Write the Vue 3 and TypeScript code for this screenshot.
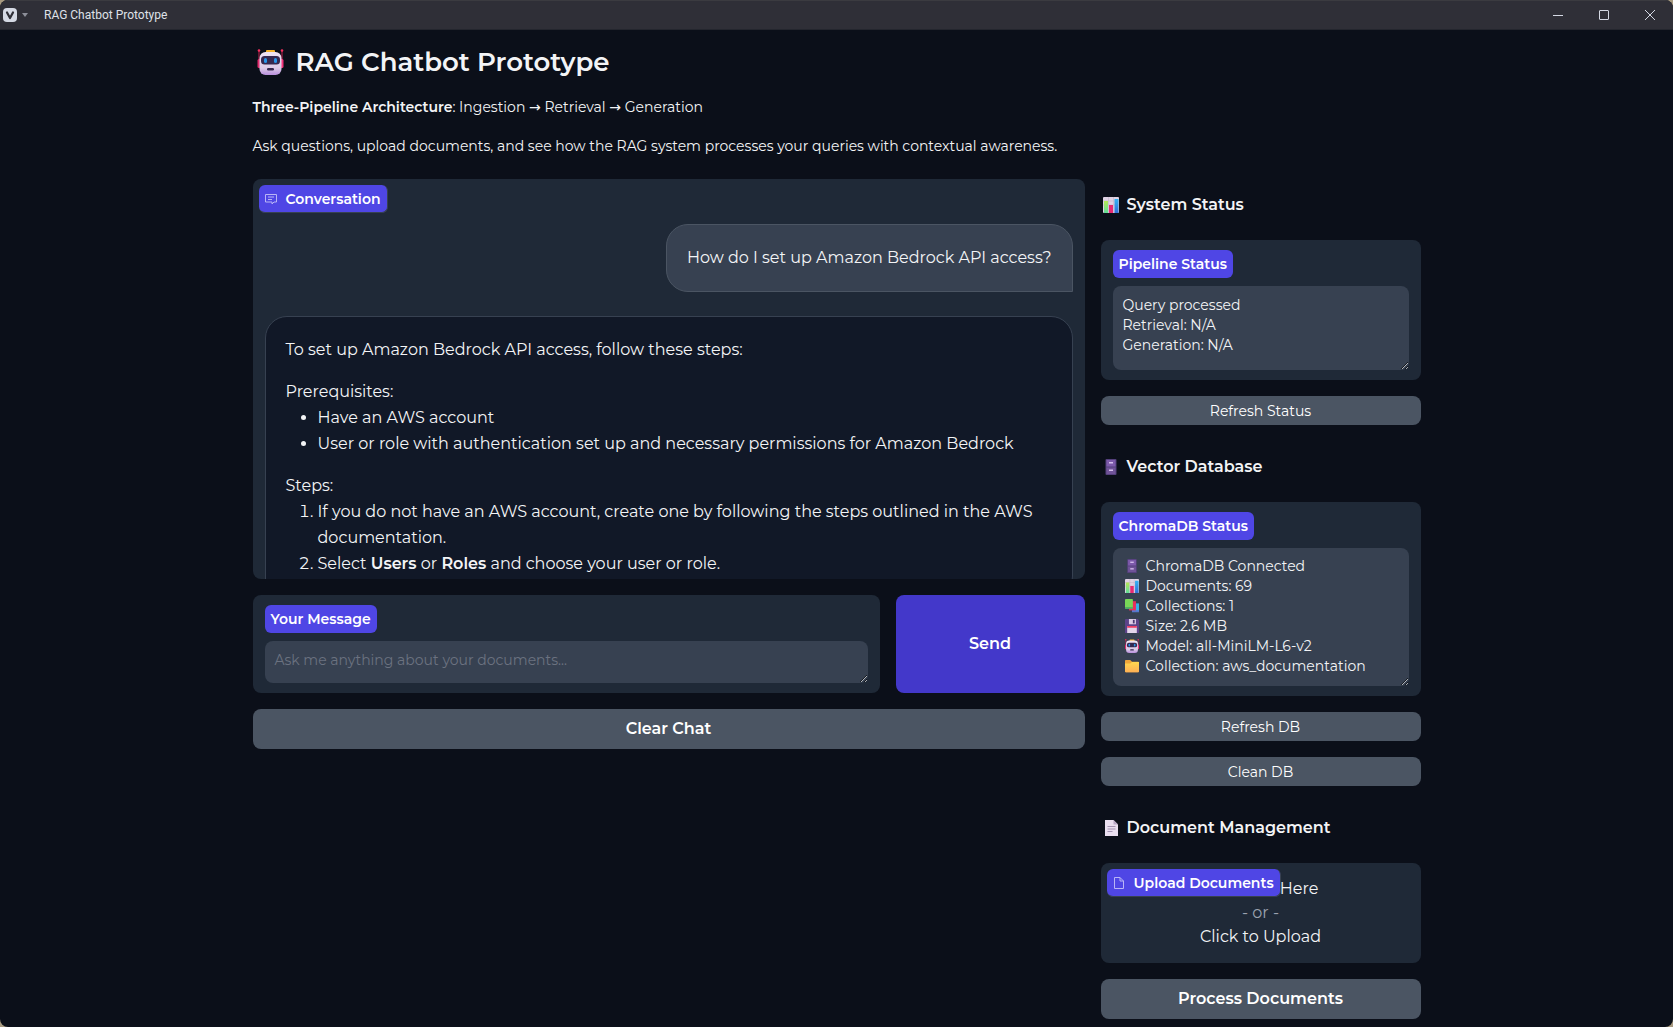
<script setup lang="ts">
import { ref } from 'vue'

const message = ref('')
const pipelineStatus = ref('Query processed\nRetrieval: N/A\nGeneration: N/A')

const databaseRows = [
  { icon: 'cabinet', text: 'ChromaDB Connected' },
  { icon: 'chart', text: 'Documents: 69' },
  { icon: 'books', text: 'Collections: 1' },
  { icon: 'floppy', text: 'Size: 2.6 MB' },
  { icon: 'robot', text: 'Model: all-MiniLM-L6-v2' },
  { icon: 'folder', text: 'Collection: aws_documentation' },
]
const databaseStatus = ref(databaseRows.map((row) => row.text).join('\n'))
</script>

<template>
  <div class="window">
    <svg class="sprite" aria-hidden="true">
      <defs>
        <linearGradient id="face" x1="0" y1="0" x2="0" y2="1">
          <stop offset="0" stop-color="#efe3f3" />
          <stop offset="0.7" stop-color="#dccbe8" />
          <stop offset="1" stop-color="#b98fdc" />
        </linearGradient>
        <linearGradient id="green" x1="0" y1="0" x2="0" y2="1">
          <stop offset="0" stop-color="#b5e655" />
          <stop offset="1" stop-color="#5fdc9a" />
        </linearGradient>
        <linearGradient id="yellow" x1="0" y1="0" x2="0" y2="1">
          <stop offset="0" stop-color="#ffd84f" />
          <stop offset="1" stop-color="#ffb055" />
        </linearGradient>
        <linearGradient id="blue" x1="0" y1="0" x2="0" y2="1">
          <stop offset="0" stop-color="#35b4f4" />
          <stop offset="1" stop-color="#3070d8" />
        </linearGradient>
      </defs>
      <symbol id="robot" viewBox="0 0 26 26">
        <path d="M1.5 1v16M24.500 1v16" stroke="#c4204e" stroke-width="1" />
        <circle cx="1.500" cy="1.500" r="1.300" fill="#f5315e" />
        <circle cx="24.500" cy="1.500" r="1.300" fill="#f5315e" />
        <rect x="0" y="10" width="4" height="9" rx="1.500" fill="#e02b6c" />
        <rect x="22" y="10" width="4" height="9" rx="1.500" fill="#f5357c" />
        <rect x="8.500" y="1" width="9" height="4" rx="1" fill="#f6b32b" />
        <rect x="2" y="3" width="22" height="23" rx="6" fill="url(#face)" />
        <rect x="3.500" y="7" width="19" height="8.500" rx="3.500" fill="#35284f" />
        <rect x="6.500" y="9" width="3" height="5" rx="1.500" fill="#2795e8" />
        <rect x="16.500" y="9" width="3" height="5" rx="1.500" fill="#2795e8" />
        <rect x="9.500" y="19" width="7" height="2.500" rx="1.200" fill="#35284f" />
      </symbol>
      <symbol id="chart" viewBox="0 0 16 16">
        <rect width="16" height="16" rx="1" fill="#e0d3e4" />
        <path d="M0 4h16M0 8h16M5.500 0v16M10.500 0v16" stroke="#c3b5cc" stroke-width="0.600" />
        <rect x="1" y="4" width="4" height="12" fill="url(#green)" />
        <rect x="6" y="8" width="4" height="8" fill="#e82a72" />
        <rect x="11.500" y="2" width="4" height="14" fill="url(#blue)" />
      </symbol>
      <symbol id="cabinet" viewBox="0 0 16 16">
        <rect x="2.500" width="11" height="16" rx="1" fill="#54407c" />
        <rect x="3.500" y="1" width="9" height="6.500" fill="#7d5aab" />
        <rect x="3.500" y="8.500" width="9" height="6.500" fill="#705398" />
        <rect x="6" y="3" width="4" height="1.500" fill="#d6bfee" />
        <rect x="6" y="10.500" width="4" height="1.500" fill="#d6bfee" />
      </symbol>
      <symbol id="books" viewBox="0 0 16 16">
        <rect x="8" y="5" width="8" height="10" fill="#35aee8" />
        <rect x="8" y="13" width="8" height="2" fill="#5a75cf" />
        <rect x="4.500" y="2.500" width="8" height="10.500" fill="#e92d5c" />
        <rect x="0" y="0" width="9" height="11" rx="0.500" fill="#79d657" />
        <rect x="0" y="9.500" width="9" height="1.500" fill="#439e6b" />
      </symbol>
      <symbol id="floppy" viewBox="0 0 16 16">
        <path d="M1 0h13.500L16 1.500V16H0V1a1 1 0 0 1 1-1z" fill="#5b4388" />
        <rect x="4.500" width="8" height="6" fill="#dccbe6" />
        <rect x="9" y="1" width="2" height="4" fill="#4a3870" />
        <rect x="2.500" y="8" width="11" height="8" fill="#e4d6ea" />
        <rect x="2.500" y="8" width="11" height="2" fill="#f03c63" />
      </symbol>
      <symbol id="folder" viewBox="0 0 16 16">
        <path d="M0 2a1 1 0 0 1 1-1h5l2 2h7a1 1 0 0 1 1 1v10a1 1 0 0 1-1 1H1a1 1 0 0 1-1-1z" fill="#f0a63a" />
        <path d="M0 5h6l2-1.500h8V14a1 1 0 0 1-1 1H1a1 1 0 0 1-1-1z" fill="url(#yellow)" />
      </symbol>
      <symbol id="page" viewBox="0 0 16 16">
        <path d="M2 0h8.500L15 4.500V16H2z" fill="#eadff0" />
        <path d="M10.500 0v4.500H15z" fill="#b9a8c6" />
        <path d="M4.500 6.500h8M4.500 9h8M4.500 11.500h5" stroke="#a594b3" stroke-width="1" />
      </symbol>
    </svg>

    <header class="titlebar">
      <svg class="app-logo" viewBox="0 0 14 14" aria-hidden="true">
        <rect width="14" height="14" rx="4" fill="#d5d9e4" />
        <path d="M4 4.500l3 5.500 3-5.500" fill="none" stroke="#2f2f37" stroke-width="2.200" stroke-linecap="round" stroke-linejoin="round" />
      </svg>
      <svg class="caret" viewBox="0 0 6 4" aria-hidden="true"><path d="M0 0h6L3 4z" fill="#8d8f99" /></svg>
      <span class="window-title">RAG Chatbot Prototype</span>
      <div class="window-controls">
        <button type="button" aria-label="Minimize">
          <svg viewBox="0 0 10 10"><path d="M0 5.500h10" /></svg>
        </button>
        <button type="button" aria-label="Maximize">
          <svg viewBox="0 0 10 10"><rect x="0.500" y="0.500" width="9" height="9" rx="0.500" /></svg>
        </button>
        <button type="button" aria-label="Close">
          <svg viewBox="0 0 10 10"><path d="M0 0l10 10M10 0L0 10" /></svg>
        </button>
      </div>
    </header>

    <main class="page">
      <h1><svg class="h1-icon" aria-hidden="true"><use href="#robot" /></svg>RAG Chatbot Prototype</h1>
      <p class="intro">
        <strong>Three-Pipeline Architecture</strong>: Ingestion <span class="arrow">→</span> Retrieval
        <span class="arrow">→</span> Generation
      </p>
      <p class="intro">Ask questions, upload documents, and see how the RAG system processes your queries with contextual awareness.</p>

      <div class="columns">
        <div class="chat-column">
          <section class="chat" aria-label="Conversation">
            <div class="tag tag-corner">
              <svg class="tag-icon" viewBox="0 0 12 12" aria-hidden="true">
                <path d="M0.500 1.500h11v7.500H9L7 11V9H0.500z M3 4h6M3 6.500h4" />
              </svg>
              Conversation
            </div>
            <div class="bubble user"><p>How do I set up Amazon Bedrock API access?</p></div>
            <div class="bubble bot">
              <p>To set up Amazon Bedrock API access, follow these steps:</p>
              <p class="lead">Prerequisites:</p>
              <ul>
                <li>Have an AWS account</li>
                <li>User or role with authentication set up and necessary permissions for Amazon Bedrock</li>
              </ul>
              <p class="lead">Steps:</p>
              <ol>
                <li>If you do not have an AWS account, create one by following the steps outlined in the AWS documentation.</li>
                <li>Select <strong>Users</strong> or <strong>Roles</strong> and choose your user or role.</li>
              </ol>
            </div>
          </section>

          <form class="composer" @submit.prevent>
            <div class="panel message">
              <label class="tag" for="message">Your Message</label>
              <textarea id="message" v-model="message" rows="1" placeholder="Ask me anything about your documents..."></textarea>
            </div>
            <button type="submit" class="btn primary">Send</button>
          </form>
          <button type="button" class="btn">Clear Chat</button>
        </div>

        <aside class="side-column">
          <h2><svg class="h2-icon" aria-hidden="true"><use href="#chart" /></svg>System Status</h2>
          <div class="panel">
            <label class="tag" for="pipeline">Pipeline Status</label>
            <textarea id="pipeline" v-model="pipelineStatus" class="status" rows="3"></textarea>
          </div>
          <button type="button" class="btn small">Refresh Status</button>

          <h2><svg class="h2-icon" aria-hidden="true"><use href="#cabinet" /></svg>Vector Database</h2>
          <div class="panel">
            <label class="tag" for="database">ChromaDB Status</label>
            <div class="status-box">
              <textarea id="database" v-model="databaseStatus" class="with-icons" rows="6"></textarea>
              <div class="row-icons" aria-hidden="true">
                <svg v-for="row in databaseRows" :key="row.icon"><use :href="'#' + row.icon" /></svg>
              </div>
            </div>
          </div>
          <button type="button" class="btn small">Refresh DB</button>
          <button type="button" class="btn small">Clean DB</button>

          <h2><svg class="h2-icon" aria-hidden="true"><use href="#page" /></svg>Document Management</h2>
          <div class="upload">
            <div class="tag tag-corner">
              <svg class="tag-icon" viewBox="0 0 12 12" aria-hidden="true">
                <path d="M1.500 0.500h5.500l3.500 3.500v7.500h-9z M7 0.500V4h3.500" />
              </svg>
              Upload Documents
            </div>
            <button type="button" class="dropzone">
              <span>Drop File Here</span>
              <span class="or">- or -</span>
              <span>Click to Upload</span>
            </button>
          </div>
          <button type="button" class="btn">Process Documents</button>
        </aside>
      </div>
    </main>
  </div>
</template>

<style>
html {
  background: #a89a80;
}
body {
  margin: 0;
}
</style>

<style scoped>
* {
  box-sizing: border-box;
}
.window {
  min-height: 100vh;
  overflow: hidden;
  border-radius: 8px;
  background: #0b0f19;
  color: #f3f4f6;
  font-family: Montserrat, Inter, sans-serif;
  font-size: 16px;
  line-height: 26px;
}
.sprite {
  position: absolute;
  width: 0;
  height: 0;
}
button,
textarea {
  font-family: inherit;
  color: inherit;
}
button {
  border: 0;
  padding: 0;
  cursor: pointer;
}
p,
h1,
h2,
ul,
ol {
  margin: 0;
}
strong {
  font-weight: 600;
}

.titlebar {
  display: flex;
  align-items: center;
  height: 30px;
  padding-left: 3px;
  border-top: 1px solid #3b3b40;
  border-bottom: 1px solid #24262e;
  background: #2f2f37;
}
.app-logo {
  width: 14px;
  height: 14px;
}
.caret {
  width: 6px;
  height: 4px;
  margin: 0 16px 0 5px;
}
.window-title {
  flex: 1;
  color: #dfe1e8;
  font: 12px/16px Roboto, "Open Sans", sans-serif;
}
.window-controls {
  display: flex;
}
.window-controls button {
  display: grid;
  place-items: center;
  width: 46px;
  height: 28px;
  background: transparent;
}
.window-controls svg {
  width: 10px;
  height: 10px;
  overflow: visible;
  fill: none;
  stroke: #d5d9e4;
}

.page {
  width: 100%;
  max-width: 1200px;
  margin: 0 auto;
  padding: 14px 16px 8px;
}
h1 {
  display: flex;
  align-items: center;
  gap: 12px;
  padding-left: 4px;
  margin-bottom: 16px;
  font-size: 26px;
  font-weight: 600;
  line-height: 36px;
}
.h1-icon {
  width: 27px;
  height: 26px;
}
.intro {
  margin-bottom: 16px;
  font-size: 14px;
  line-height: 23px;
}
.arrow {
  font-family: "DejaVu Sans", sans-serif;
  line-height: 16px;
}
.columns {
  display: flex;
  align-items: flex-start;
  gap: 16px;
  padding-top: 5px;
}
.chat-column,
.side-column {
  display: flex;
  flex-direction: column;
  gap: 16px;
}
.chat-column {
  flex: 1;
  min-width: 0;
}
.side-column {
  width: 320px;
}

.chat {
  position: relative;
  display: flex;
  flex-direction: column;
  gap: 24px;
  height: 400px;
  padding: 45px 12px 0;
  overflow: hidden;
  border-radius: 8px;
  background: #1f2937;
}
.bubble {
  flex: none;
  padding: 20px;
  border: 1px solid #374151;
  border-radius: 22px;
}
.user {
  align-self: flex-end;
  border-color: #4b5563;
  border-bottom-right-radius: 0;
  background: #374151;
}
.bot {
  border-bottom-left-radius: 0;
  background: #111827;
}
.lead {
  margin-top: 16px;
}
ul,
ol {
  padding-left: 32px;
}

.tag {
  display: inline-flex;
  align-items: center;
  align-self: flex-start;
  gap: 9px;
  height: 28px;
  padding: 0 6px;
  border-radius: 6px;
  background: #4f46e5;
  color: #fff;
  font-size: 14px;
  font-weight: 600;
  line-height: 20px;
}
.tag-corner {
  position: absolute;
  top: 6px;
  left: 6px;
  z-index: 1;
  border-right: 1px solid #374151;
  border-bottom: 1px solid #374151;
}
.tag-icon {
  width: 12px;
  height: 12px;
  fill: none;
  stroke: #b9b5f6;
  stroke-linejoin: round;
}

.panel {
  display: flex;
  flex-direction: column;
  gap: 8px;
  padding: 10px 12px;
  border-radius: 8px;
  background: #1f2937;
}
textarea {
  display: block;
  width: 100%;
  padding: 9px 10px;
  border: 0;
  border-radius: 8px;
  outline: 0;
  background: #374151;
  font-size: 14px;
  line-height: 20px;
  resize: both;
  overflow: hidden;
}
textarea::placeholder {
  color: #6b7280;
}
.message textarea {
  height: 42px;
}
.status {
  height: 84px;
}
.status-box {
  position: relative;
}
.with-icons {
  padding: 8px 10px 10px 33px;
}
.row-icons {
  position: absolute;
  top: 11px;
  left: 12px;
  display: grid;
  gap: 6px;
}
.row-icons svg {
  width: 14px;
  height: 14px;
}

.composer {
  display: flex;
  gap: 16px;
}
.message {
  flex: 1;
}
.btn {
  height: 40px;
  border-radius: 8px;
  background: #4b5563;
  color: #fff;
  font-size: 16px;
  font-weight: 600;
  line-height: 24px;
}
.small {
  height: 29px;
  font-size: 14px;
  font-weight: 400;
  line-height: 20px;
}
.primary {
  width: 189px;
  height: auto;
  background: #4338ca;
}

h2 {
  display: flex;
  align-items: center;
  gap: 8px;
  height: 45px;
  padding: 6px 2px 0;
  font-size: 16px;
  font-weight: 600;
  line-height: 24px;
}
.h2-icon {
  width: 16px;
  height: 16px;
}
.upload {
  position: relative;
  border-radius: 8px;
  background: #1f2937;
}
.dropzone {
  display: flex;
  flex-direction: column;
  align-items: center;
  width: 100%;
  padding: 14px 0;
  background: transparent;
  font-size: 16px;
  line-height: 24px;
}
.or {
  color: #9ca3af;
}
</style>
